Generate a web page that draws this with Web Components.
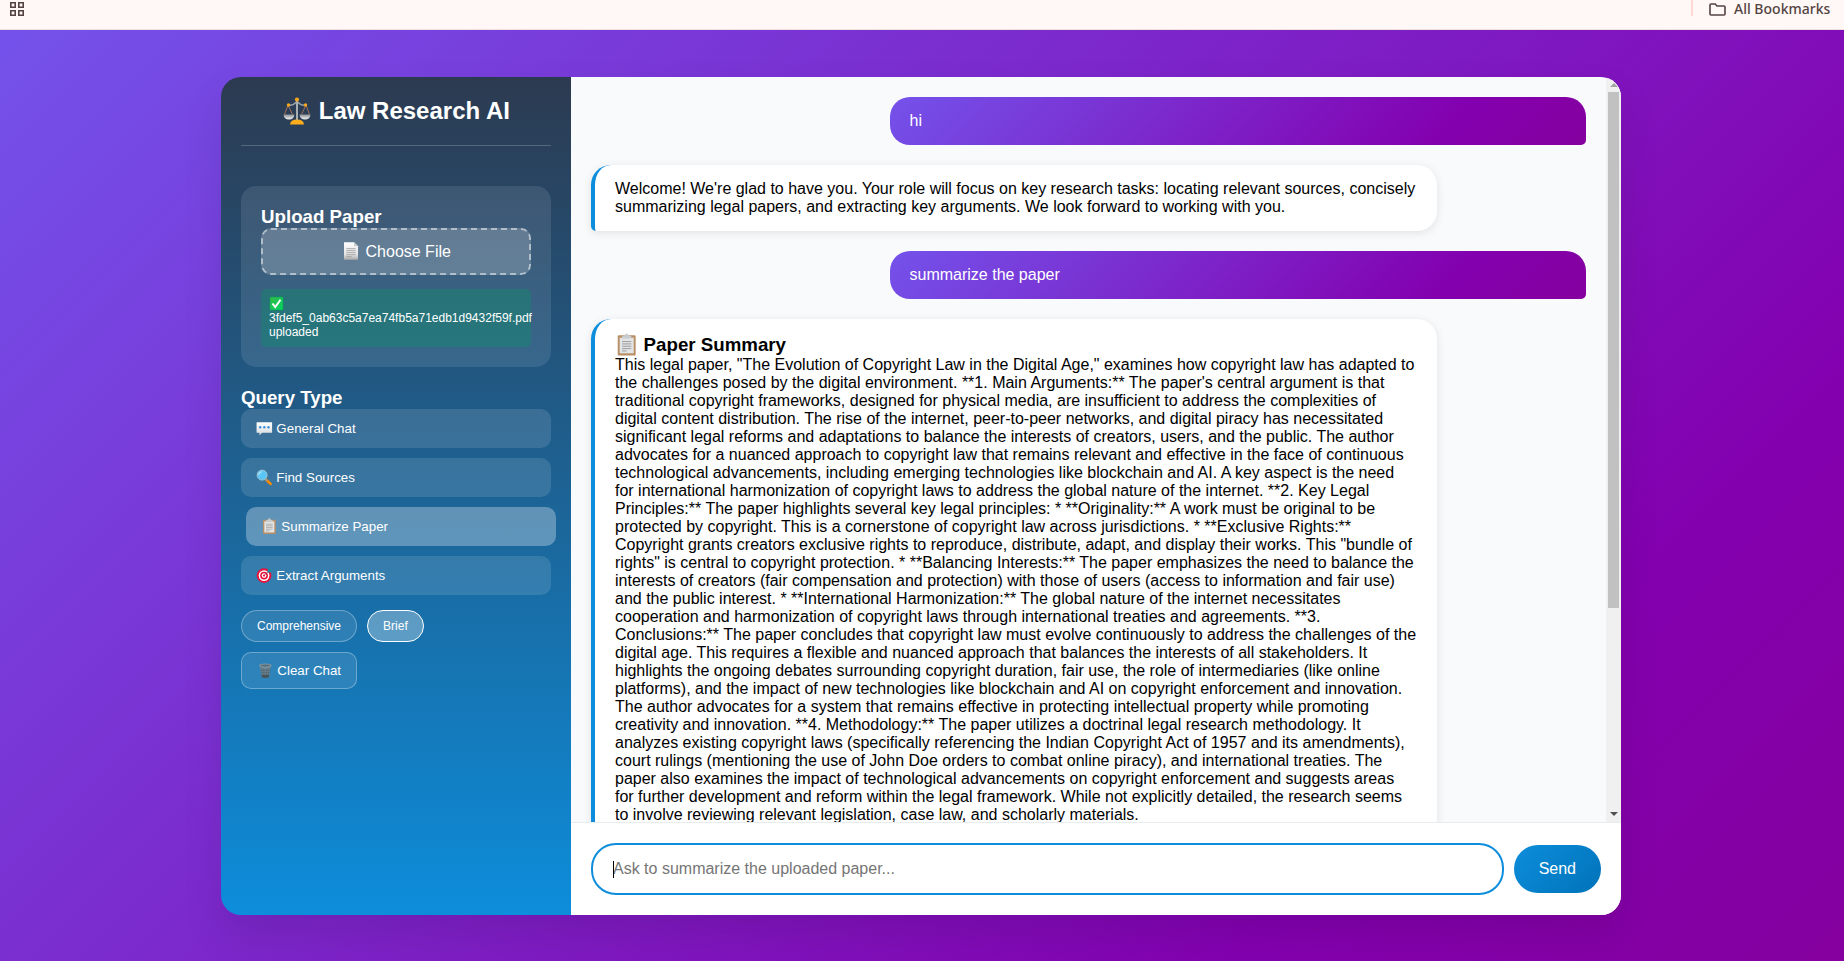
<!DOCTYPE html>
<html lang="en">
<head>
<meta charset="utf-8">
<title>Law Research AI</title>
<style>
  html, body { height: 100%; margin: 0; }
  body { font-family: "Liberation Sans", Arial, sans-serif; font-size: 16px; overflow: hidden; }
</style>
</head>
<body>
<law-app></law-app>

<script>
const define = (name, markup, setup) => {
  const template = document.createElement('template');
  template.innerHTML = '<style>*{box-sizing:border-box;margin:0}button,input{font-family:inherit}</style>' + markup;
  customElements.define(name, class extends HTMLElement {
    constructor() {
      super();
      this.attachShadow({ mode: 'open' }).append(template.content.cloneNode(true));
    }
    connectedCallback() { if (setup) setup(this, this.shadowRoot); }
  });
};

/* Colour icons on a 30 x 30 grid, sized by the font around them. */
const page = `
  <path d="M8 11.500h14M8 14.500h14M8 17.500h14M8 20.500h14M8 23.500h8" stroke="#9a9a9a" stroke-width="1.200"/>`;
const icons = {
  scales: `
    <defs><linearGradient id="pan" x2="0" y2="1"><stop stop-color="#8d9295"/><stop offset="1" stop-color="#f2f2f2"/></linearGradient></defs>
    <path d="M6 9L2.500 18.500M6 9L10.500 18.500M24 9L19.500 18.500M24 9L27.500 18.500" stroke="#a0715c" stroke-width="1"/>
    <path d="M6 9q5 1 9-3.500q4 4.500 9 3.500" fill="none" stroke="#9aa0a4" stroke-width="1.400"/>
    <path d="M15 4v20" stroke="#a9aeb1" stroke-width="2"/>
    <path d="M1.500 18.500h11q-.5 5-5.500 5t-5.500-5zM17.500 18.500h11q-.5 5-5.500 5t-5.500-5z" fill="url(#pan)"/>
    <path d="M8 28.500q.5-5 7-5t7 5z" fill="#fbad1c"/>
    <circle cx="15" cy="3.500" r="2.100" fill="#f5a81c"/><circle cx="6.500" cy="9" r="1.700" fill="#f5a81c"/><circle cx="23.500" cy="9" r="1.700" fill="#f5a81c"/>`,
  page: `
    <defs><linearGradient id="sheet" x2="0" y2="1"><stop stop-color="#fff"/><stop offset=".7" stop-color="#e3e3e3"/><stop offset="1" stop-color="#a8a8a8"/></linearGradient></defs>
    <path d="M4.500 2h15l6 6v20h-21z" fill="url(#sheet)"/><path d="M19.500 2v6h6z" fill="#c9cdcf"/>${page}`,
  check: `
    <defs><linearGradient id="tick" x2="1" y2="1"><stop stop-color="#35b94a"/><stop offset="1" stop-color="#00d45f"/></linearGradient></defs>
    <rect x="2" y="2" width="26" height="26" rx="1.500" fill="url(#tick)" stroke="#00a651" stroke-width="1"/>
    <path d="M7 15l5.500 7L23 7.500" fill="none" stroke="#fff" stroke-width="4"/>`,
  chat: `
    <defs><linearGradient id="bubble" x2="0" y2="1"><stop stop-color="#fff"/><stop offset="1" stop-color="#d5dadd"/></linearGradient></defs>
    <path d="M2 4h26q1 0 1 1v17q0 1-1 1H11l-5 5q1-3 0-5H2q-1 0-1-1V5q0-1 1-1z" fill="url(#bubble)"/>
    <circle cx="7.500" cy="13" r="2.100" fill="#3b8fd8"/><circle cx="15" cy="13" r="2.100" fill="#3b8fd8"/><circle cx="22.500" cy="13" r="2.100" fill="#3b8fd8"/>`,
  search: `
    <path d="M18 19l8.500 8" stroke="#f58a07" stroke-width="4.600" stroke-linecap="round"/>
    <path d="M16 17l4 4" stroke="#8c9ba3" stroke-width="3"/>
    <circle cx="11" cy="11" r="9" fill="#58c7f8" stroke="#9fc0cc" stroke-width="1.800"/>
    <path d="M5 11q0-5 6-6" fill="none" stroke="#b5e8ff" stroke-width="2"/>`,
  clipboard: `
    <rect x="3.500" y="3" width="23" height="26" rx="1.500" fill="#b98f66"/>
    <path d="M6 6h18v20H6z" fill="#e2e4e5"/>
    <path d="M9 5q0-2 4-2q0-2.500 2-2.500t2 2.500q4 0 4 2v2H9z" fill="#c9ccce"/>
    <path d="M9 11h12M9 14h12M9 17h12M9 20h12M9 23h6" stroke="#999" stroke-width="1.200"/>`,
  target: `
    <circle cx="14.500" cy="15.500" r="13.300" fill="#e8123c"/><circle cx="14.500" cy="15.500" r="9.700" fill="#fff"/>
    <circle cx="14.500" cy="15.500" r="7" fill="#e8123c"/><circle cx="14.500" cy="15.500" r="4.200" fill="#fff"/><circle cx="14.500" cy="15.500" r="2" fill="#e8123c"/>
    <path d="M15 15l8-8" stroke="#7b3042" stroke-width="1.300"/><path d="M21 6l3-5 1 4 4 1-4 4-4 0z" fill="#0e93a3"/>`,
  trash: `
    <path d="M5.500 8h19l-2.500 19q-7 3-14 0z" fill="#6e8491"/>
    <path d="M8 11l2 16M12 11l1 17M18 11l-1 17M22 11l-2 16M7 15h16M7 19h16M8 23h14" stroke="#4c616c" stroke-width="1"/>
    <path d="M8 23.500h14l-.5 4q-6.500 2.500-13 0z" fill="#47535a"/>
    <ellipse cx="15" cy="6.500" rx="11.500" ry="4" fill="#8395a0"/><ellipse cx="15" cy="6.500" rx="8.500" ry="2" fill="#52707f"/>`
};

customElements.define('color-icon', class extends HTMLElement {
  constructor() {
    super();
    this.attachShadow({ mode: 'open' });
  }
  connectedCallback() {
    this.shadowRoot.innerHTML = `
      <style>
        :host { --size: 1.25em; display: inline-block; width: var(--size); height: .7em; }
        svg { display: block; width: var(--size); height: var(--size); margin-top: calc((.7em - var(--size)) / 2); }
      </style>
      <svg viewBox="0 0 30 30" aria-hidden="true">${icons[this.getAttribute('name')]}</svg>`;
  }
});

define('bookmarks-bar', `
  <style>
    :host { display: flex; justify-content: space-between; align-items: flex-start; height: 30px; flex: none;
      padding: 0 12px 0 10px; background: #fff8f6; border-bottom: 1px solid #eee0dd; box-sizing: border-box; color: #534341; }
    button { display: flex; border: 0; padding: 0; background: none; color: inherit; }
    .apps { padding-top: 2px; }
    .all { align-items: center; gap: 8px; height: 18px; font: 500 14px/18px "Noto Sans", "Open Sans", sans-serif; }
    .all span { min-width: 98px; text-align: left; }
    .right { display: flex; gap: 16px; }
    .rule { width: 2px; height: 16px; background: #ffd9d2; }
  </style>
  <button class="apps" aria-label="Apps">
    <svg width="14" height="14" fill="none" stroke="currentColor" stroke-width="1.6">
      <path d="M.8.8h4.4v4.4H.8zM8.8.8h4.4v4.4H8.8zM.8 8.8h4.4v4.4H.8zM8.8 8.8h4.4v4.4H8.8z"/>
    </svg>
  </button>
  <div class="right">
    <div class="rule"></div>
    <button class="all">
      <svg width="17" height="13" viewBox="0 0 17 13" fill="none" stroke="currentColor" stroke-width="1.6">
        <path d="M1 2q0-1 1-1h4.200l1.800 2h7q1 0 1 1v7q0 1-1 1h-13q-1 0-1-1z"/>
      </svg>
      <span>All Bookmarks</span>
    </button>
  </div>`);

define('query-option', `
  <style>
    :host { display: block; }
    button { display: block; width: 100%; padding: 12px 15px; border: 0; border-radius: 10px; text-align: left;
      color: #fff; background: rgba(255,255,255,.12); }
    :host([active]) button { background: rgba(255,255,255,.3); transform: translateX(5px); }
  </style>
  <button><slot></slot></button>`);

define('detail-pill', `
  <style>
    :host { display: block; }
    button { padding: 8px 15px; border: 1px solid rgba(255,255,255,.3); border-radius: 20px;
      color: #fff; font-size: 12px; background: rgba(255,255,255,.1); }
    :host([active]) button { background: rgba(255,255,255,.3); border-color: #fff; }
  </style>
  <button><slot></slot></button>`);

define('paper-upload', `
  <style>
    :host { display: block; padding: 20px; border-radius: 15px; background: rgba(255,255,255,.1); }
    h3 { line-height: 22px; }
    label { display: block; padding: 12px; border: 2px dashed rgba(255,255,255,.5); border-radius: 10px;
      background: rgba(255,255,255,.2); text-align: center; line-height: 19px; }
    input { display: none; }
    p { margin-top: 14px; padding: 8px; border-radius: 5px; background: rgba(0,160,100,.3); font-size: 12px; line-height: 14px; }
  </style>
  <h3>Upload Paper</h3>
  <label for="file"><color-icon name="page"></color-icon> Choose File</label>
  <input id="file" type="file">
  <p><color-icon name="check"></color-icon> 3fdef5_0ab63c5a7ea74fb5a71edb1d9432f59f.pdf uploaded</p>`);

define('side-panel', `
  <style>
    :host { display: block; width: 350px; flex: none; padding: 20px; box-sizing: border-box; color: #fff;
      background: linear-gradient(180deg, #2c3a50 0%, #0d8ddb 100%); }
    header { padding-bottom: 20px; margin-bottom: 40px; border-bottom: 1px solid rgba(255,255,255,.2); text-align: center; }
    h2 { font-size: 24px; line-height: 28px; }
    h3 { margin-top: 20px; line-height: 22px; }
    nav { display: grid; gap: 10px; }
    .details { display: grid; grid-template-columns: max-content max-content; gap: 10px; margin-top: 15px; }
    .clear { padding: 10px 15px; border: 1px solid rgba(255,255,255,.3); border-radius: 10px;
      color: #fff; background: rgba(255,255,255,.1); }
  </style>
  <header><h2><color-icon name="scales"></color-icon> Law Research AI</h2></header>
  <paper-upload></paper-upload>
  <h3>Query Type</h3>
  <nav>
    <query-option><color-icon name="chat"></color-icon> General Chat</query-option>
    <query-option><color-icon name="search"></color-icon> Find Sources</query-option>
    <query-option active><color-icon name="clipboard"></color-icon> Summarize Paper</query-option>
    <query-option><color-icon name="target"></color-icon> Extract Arguments</query-option>
  </nav>
  <div class="details">
    <detail-pill>Comprehensive</detail-pill>
    <detail-pill active>Brief</detail-pill>
    <button class="clear"><color-icon name="trash"></color-icon> Clear Chat</button>
  </div>`);

define('chat-message', `
  <style>
    :host { display: block; box-sizing: border-box; flex: none; padding: 15px 20px; line-height: 18px; }
    :host([from="user"]) { width: 70%; align-self: flex-end; border-radius: 20px 20px 5px 20px; color: #fff;
      background: linear-gradient(135deg, #7452ea 0%, #8300af 79%, #85009e 100%); }
    :host([from="bot"]) { max-width: 85%; align-self: flex-start; border-left: 4px solid #0d8ddb;
      border-radius: 20px 20px 20px 5px; background: #fff; color: #000; box-shadow: 0 2px 10px rgba(0,0,0,.1); }
    ::slotted(h3) { margin: 0; line-height: 22px; }
  </style>
  <slot></slot>`);

define('scroll-rail', `
  <style>
    :host { display: flex; flex-direction: column; width: 15px; flex: none; background: #f0f0f0; }
    svg { display: block; flex: none; }
    .track { flex: 1; display: grid; grid-template-rows: 13fr 5fr; padding: 0 2px; }
    .thumb { background: #c1c1c1; }
  </style>
  <svg width="15" height="15"><path d="M4 10h8L8 6z" fill="#a3a3a3"/></svg>
  <div class="track"><div class="thumb"></div></div>
  <svg width="15" height="15"><path d="M4 5h8L8 9z" fill="#505050"/></svg>`);

define('chat-composer', `
  <style>
    :host { display: flex; align-items: center; gap: 10px; flex: none; padding: 20px; border-top: 1px solid #e9ecef; background: #fff; }
    .field { position: relative; flex: 1; display: flex; }
    input { flex: 1; min-width: 0; padding: 15px 20px; border: 2px solid #0d8ddb; border-radius: 25px; outline: 0;
      font-size: 16px; line-height: 18px; height: 52px; background: #fff; caret-color: transparent; }
    input::placeholder { color: #757575; }
    .caret { position: absolute; left: 22px; top: 18px; width: 1px; height: 17px; background: #000; }
    button { padding: 15px 25px; border: 0; border-radius: 25px; color: #fff; font-size: 16px; line-height: 18px;
      background: linear-gradient(135deg, #0d8ddb, #0073b9); }
  </style>
  <div class="field">
    <input type="text" aria-label="Message" placeholder="Ask to summarize the uploaded paper...">
    <span class="caret"></span>
  </div>
  <button>Send</button>`, (host, root) => {
    const input = root.querySelector('input');
    input.addEventListener('input', () => {
      input.style.caretColor = 'auto';
      root.querySelector('.caret').hidden = true;
    });
  });

define('chat-panel', `
  <style>
    :host { display: flex; flex-direction: column; flex: 1; min-width: 0; background: #f8fafc; }
    .view { display: flex; flex: 1; min-height: 0; }
    .messages { display: flex; flex-direction: column; gap: 20px; flex: 1; min-width: 0; padding: 20px;
      overflow-y: auto; scrollbar-width: none; }
  </style>
  <div class="view">
    <div class="messages">
      <chat-message from="user">hi</chat-message>
      <chat-message from="bot">Welcome! We're glad to have you. Your role will focus on key research tasks: locating relevant sources, concisely summarizing legal papers, and extracting key arguments. We look forward to working with you.</chat-message>
      <chat-message from="user">summarize the paper</chat-message>
      <chat-message from="bot"><h3><color-icon name="clipboard"></color-icon> Paper Summary</h3>This legal paper, "The Evolution of Copyright Law in the Digital Age," examines how copyright law has adapted to the challenges posed by the digital environment. **1. Main Arguments:** The paper's central argument is that traditional copyright frameworks, designed for physical media, are insufficient to address the complexities of digital content distribution. The rise of the internet, peer-to-peer networks, and digital piracy has necessitated significant legal reforms and adaptations to balance the interests of creators, users, and the public. The author advocates for a nuanced approach to copyright law that remains relevant and effective in the face of continuous technological advancements, including emerging technologies like blockchain and AI. A key aspect is the need for international harmonization of copyright laws to address the global nature of the internet. **2. Key Legal Principles:** The paper highlights several key legal principles: * **Originality:** A work must be original to be protected by copyright. This is a cornerstone of copyright law across jurisdictions. * **Exclusive Rights:** Copyright grants creators exclusive rights to reproduce, distribute, adapt, and display their works. This "bundle of rights" is central to copyright protection. * **Balancing Interests:** The paper emphasizes the need to balance the interests of creators (fair compensation and protection) with those of users (access to information and fair use) and the public interest. * **International Harmonization:** The global nature of the internet necessitates cooperation and harmonization of copyright laws through international treaties and agreements. **3. Conclusions:** The paper concludes that copyright law must evolve continuously to address the challenges of the digital age. This requires a flexible and nuanced approach that balances the interests of all stakeholders. It highlights the ongoing debates surrounding copyright duration, fair use, the role of intermediaries (like online platforms), and the impact of new technologies like blockchain and AI on copyright enforcement and innovation. The author advocates for a system that remains effective in protecting intellectual property while promoting creativity and innovation. **4. Methodology:** The paper utilizes a doctrinal legal research methodology. It analyzes existing copyright laws (specifically referencing the Indian Copyright Act of 1957 and its amendments), court rulings (mentioning the use of John Doe orders to combat online piracy), and international treaties. The paper also examines the impact of technological advancements on copyright enforcement and suggests areas for further development and reform within the legal framework. While not explicitly detailed, the research seems to involve reviewing relevant legislation, case law, and scholarly materials.</chat-message>
    </div>
    <scroll-rail></scroll-rail>
  </div>
  <chat-composer></chat-composer>`);

define('law-app', `
  <style>
    :host { display: flex; flex-direction: column; height: 100%; }
    main { flex: 1; min-height: 0; display: flex; justify-content: center; padding: 47px 2px 46px 0;
      background: linear-gradient(135deg, #7452ea 0%, #8300af 79%, #85009e 100%); }
    .card { display: flex; width: 95%; max-width: 1400px; border-radius: 20px; overflow: hidden;
      box-shadow: 0 20px 40px rgba(0,0,0,.1); }
  </style>
  <bookmarks-bar></bookmarks-bar>
  <main>
    <div class="card">
      <side-panel></side-panel>
      <chat-panel></chat-panel>
    </div>
  </main>`);
</script>
</body>
</html>
